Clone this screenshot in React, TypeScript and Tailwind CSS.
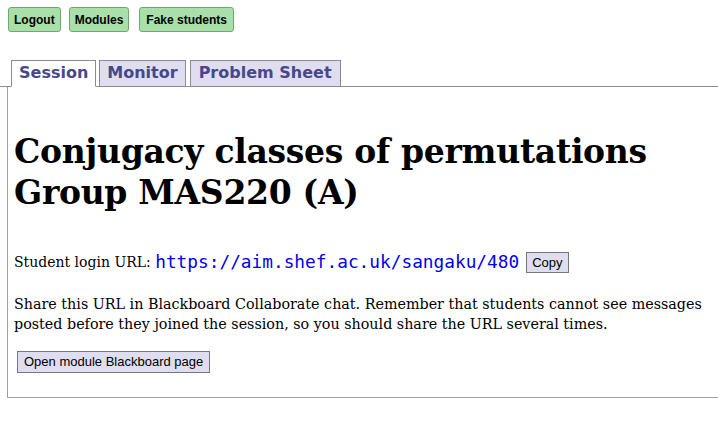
export default function App() {
  const tabs = ["Session", "Monitor", "Problem Sheet"];
  return (
    <div className="min-h-[435px] bg-white text-black" style={{ fontFamily: '"DejaVu Serif", serif' }}>
      <div className="flex gap-2 px-2 pt-[7px]">
        {["Logout", "Modules", "Fake students"].map((b, i) => (
          <button
            key={b}
            className={`h-[25px] px-[5px] rounded-[3px] border border-[#6fa86f] bg-[#a9dfa9] text-[12px] text-black font-['Liberation_Sans',sans-serif] font-bold ${
              i === 2 ? "ml-[2px] px-[6px]" : ""
            }`}
          >
            {b}
          </button>
        ))}
      </div>

      <div className="mt-[28px] flex items-end pl-[11px] border-b border-[#8a8a9a] font-['DejaVu_Sans',sans-serif] font-bold text-[16px] text-[#47478a]">
        {tabs.map((t, i) => (
          <div
            key={t}
            className={`mr-[3px] px-[7px] h-[26px] leading-[24px] border border-[#8a8a9a] ${
              i === 0 ? "bg-white border-b-white -mb-px h-[27px]" : "bg-[#dedef0] border-b-0"
            } ${i === 2 ? "ml-px px-[8px]" : ""}`}
          >
            {t}
          </div>
        ))}
      </div>

      <div className="ml-[7px] border-l border-b border-[#a0a0a0] pl-[6px] pt-[44px] pb-[24px]">
        <h1 className="text-[33px] leading-[41px] font-bold tracking-[-0.3px]">
          Conjugacy classes of permutations
          <br />
          Group MAS220 (A)
        </h1>

        <div className="mt-[36px] flex items-center text-[14px]">
          <span>Student login URL:&nbsp;</span>
          <span className="text-[17.8px] text-[#0000ee] font-['DejaVu_Sans_Mono',monospace]">
            https://aim.shef.ac.uk/sangaku/480
          </span>
          <button className="ml-[7px] h-[21px] px-[5px] border border-[#777] bg-[#dedef0] text-[13px] font-['Liberation_Sans',sans-serif]">
            Copy
          </button>
        </div>

        <p className="mt-[18px] text-[14.3px] leading-[20px] w-[690px]">
          Share this URL in Blackboard Collaborate chat. Remember that students cannot see messages
          <br />
          posted before they joined the session, so you should share the URL several times.
        </p>

        <button className="mt-[17px] ml-[3px] h-[22px] px-[6px] border border-[#777] bg-[#dedef0] text-[13px] font-['Liberation_Sans',sans-serif]">
          Open module Blackboard page
        </button>
      </div>
    </div>
  );
}
